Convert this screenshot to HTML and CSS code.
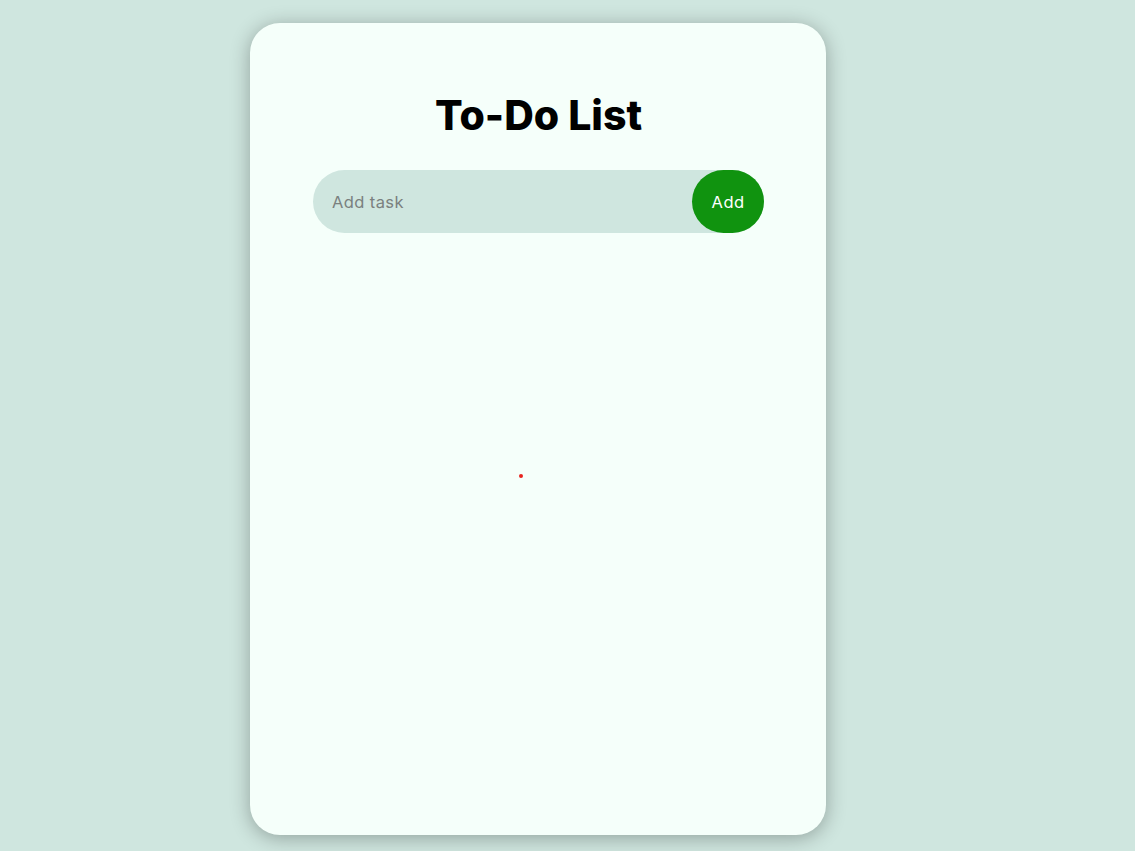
FILE: index.html
```html
<!DOCTYPE html>
<html>
<head>
<meta charset="utf-8">
<link rel="stylesheet" href="styles.css">
</head>
<body>
<div class="container">
  <div class="todo-app">
    <h2 class="title">To-Do List</h2>
    <div class="row">
      <input class="task-input" type="text" placeholder="Add task">
      <button class="add-btn">Add</button>
    </div>
    <ul class="list-container"></ul>
    <span class="dot"></span>
  </div>
</div>
</body>
</html>
```
FILE: styles.css
```css
* { box-sizing: border-box; margin: 0; padding: 0; }
html, body { height: 100%; }
body {
  background: #cfe6df;
  font-family: Inter, "Noto Sans", sans-serif;
}
.container {
  padding-top: 23px;
  padding-left: 250px;
}
.todo-app {
  position: relative;
  width: 576px;
  height: 812px;
  background: #f5fffa;
  border-radius: 30px;
  box-shadow: 0 3px 20px rgba(0, 0, 0, 0.3);
  padding: 70px 62px 0 63px;
}
.title {
  text-align: center;
  font-size: 41px;
  font-weight: 800;
  color: #000;
  line-height: 44px;
  letter-spacing: 0;
}
.row {
  margin-top: 33px;
  display: flex;
  align-items: center;
  height: 63px;
  background: #cfe6df;
  border-radius: 32px;
}
.task-input {
  flex: 1;
  border: none;
  outline: none;
  background: transparent;
  padding-left: 19px;
  font-family: inherit;
  font-size: 16.5px;
  letter-spacing: 0.4px;
  color: #333;
  height: 100%;
}
.task-input::placeholder { color: #7a807e; }
.add-btn {
  width: 72px;
  height: 63px;
  border: none;
  border-radius: 32px;
  background: #10930f;
  color: #fff;
  font-family: inherit;
  font-size: 16.5px;
  letter-spacing: 0.4px;
  cursor: pointer;
}
.list-container { list-style: none; }
.dot {
  position: absolute;
  left: 269px;
  top: 451px;
  width: 4px;
  height: 4px;
  border-radius: 50%;
  background: #e8241e;
}
```
